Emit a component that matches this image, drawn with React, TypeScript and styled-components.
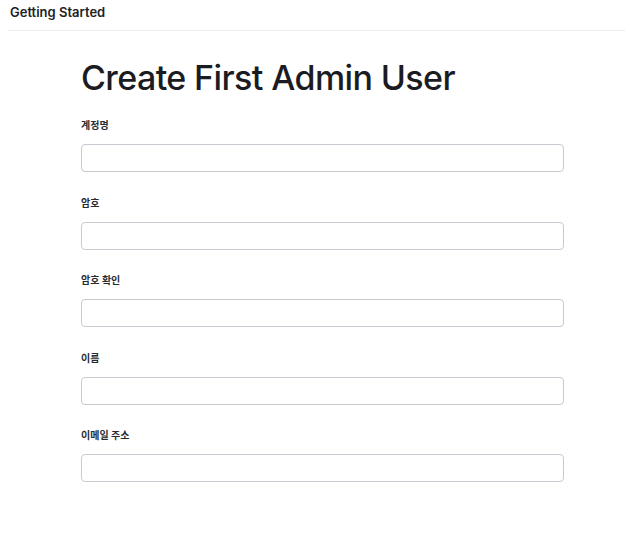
import { createGlobalStyle } from "styled-components";
import styled from "styled-components";

const GlobalStyle = createGlobalStyle`
  html, body {
    margin: 0;
    padding: 0;
    background: #ffffff;
    font-family: Inter, "Noto Sans CJK KR", sans-serif;
    color: #1f2024;
  }
`;

const Page = styled.div`
  width: 625px;
  min-height: 554px;
`;

const TopBar = styled.header`
  margin-left: 8px;
  height: 30px;
  border-bottom: 1px solid #ececec;
  display: flex;
  align-items: flex-start;
`;

const TopTitle = styled.div`
  padding-top: 4px;
  padding-left: 2px;
  font-size: 13px;
  font-weight: 600;
  color: #222;
`;

const Content = styled.main`
  padding: 25px 61px 0 81px;
`;

const Heading = styled.h1`
  margin: 0 0 18px;
  font-size: 34px;
  font-weight: 500;
  letter-spacing: -0.6px;
  line-height: 44px;
  color: #1b1c22;
`;

const Form = styled.form`
  display: flex;
  flex-direction: column;
  gap: 23.5px;
`;

const Field = styled.div`
  display: flex;
  flex-direction: column;
  gap: 12px;
`;

const Label = styled.label`
  font-size: 10px;
  font-weight: 600;
  line-height: 14px;
  color: #2a2b30;
`;

const Input = styled.input`
  box-sizing: border-box;
  width: 483px;
  height: 28px;
  border: 1.5px solid #c6cbd2;
  border-radius: 4px;
  background: #fff;
  outline: none;
  padding: 0 8px;
`;

const fields = [
  { id: "username", label: "계정명", type: "text" },
  { id: "password", label: "암호", type: "password" },
  { id: "password2", label: "암호 확인", type: "password" },
  { id: "name", label: "이름", type: "text" },
  { id: "email", label: "이메일 주소", type: "email" },
];

export default function App() {
  return (
    <Page>
      <GlobalStyle />
      <TopBar>
        <TopTitle>Getting Started</TopTitle>
      </TopBar>
      <Content>
        <Heading>Create First Admin User</Heading>
        <Form>
          {fields.map((f) => (
            <Field key={f.id}>
              <Label htmlFor={f.id}>{f.label}</Label>
              <Input id={f.id} type={f.type} />
            </Field>
          ))}
        </Form>
      </Content>
    </Page>
  );
}
